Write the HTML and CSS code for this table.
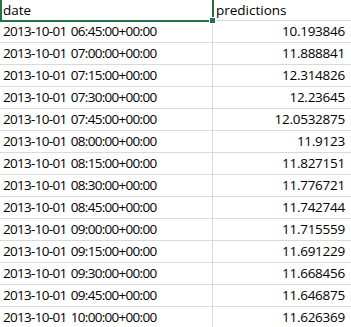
FILE: index.html
```html
<!DOCTYPE html>
<html>
<head>
<meta charset="utf-8">
<link rel="stylesheet" href="styles.css">
</head>
<body>
<div class="sheet">
  <div class="cell hdr">date</div>
  <div class="cell hdr colb">predictions</div>
  <div class="cell dt">2013-10-01 06:45:00+00:00</div><div class="cell colb num">10.193846</div>
  <div class="cell dt">2013-10-01 07:00:00+00:00</div><div class="cell colb num">11.888841</div>
  <div class="cell dt">2013-10-01 07:15:00+00:00</div><div class="cell colb num">12.314826</div>
  <div class="cell dt">2013-10-01 07:30:00+00:00</div><div class="cell colb num">12.23645</div>
  <div class="cell dt">2013-10-01 07:45:00+00:00</div><div class="cell colb num">12.0532875</div>
  <div class="cell dt">2013-10-01 08:00:00+00:00</div><div class="cell colb num">11.9123</div>
  <div class="cell dt">2013-10-01 08:15:00+00:00</div><div class="cell colb num">11.827151</div>
  <div class="cell dt">2013-10-01 08:30:00+00:00</div><div class="cell colb num">11.776721</div>
  <div class="cell dt">2013-10-01 08:45:00+00:00</div><div class="cell colb num">11.742744</div>
  <div class="cell dt">2013-10-01 09:00:00+00:00</div><div class="cell colb num">11.715559</div>
  <div class="cell dt">2013-10-01 09:15:00+00:00</div><div class="cell colb num">11.691229</div>
  <div class="cell dt">2013-10-01 09:30:00+00:00</div><div class="cell colb num">11.668456</div>
  <div class="cell dt">2013-10-01 09:45:00+00:00</div><div class="cell colb num">11.646875</div>
  <div class="cell dt">2013-10-01 10:00:00+00:00</div><div class="cell colb num">11.626369</div>
  <div class="selection"><span class="handle"></span></div>
</div>
</body>
</html>
```
FILE: styles.css
```css
html, body {
  margin: 0;
  padding: 0;
  background: #ffffff;
  overflow: hidden;
}
.sheet {
  position: relative;
  display: grid;
  grid-template-columns: 213px 1fr;
  width: 351px;
  font-family: "Open Sans", "Liberation Sans", sans-serif;
  font-size: 13.5px;
  color: #000000;
}
.cell {
  box-sizing: border-box;
  height: 22px;
  line-height: 21px;
  padding-left: 3px;
  border-bottom: 1px solid #dadada;
  border-right: 1px solid #dadada;
  white-space: nowrap;
  overflow: visible;
}
.cell.colb {
  border-right: none;
}
.cell.hdr {
  height: 21px;
  padding-top: 1px;
  line-height: 19px;
}
.cell.dt {
  letter-spacing: -0.7px;
  word-spacing: 1.5px;
}
.cell.num {
  text-align: right;
  padding-right: 6px;
  letter-spacing: -0.25px;
}
.selection {
  position: absolute;
  left: 0;
  top: -10px;
  width: 214px;
  height: 32px;
  box-sizing: border-box;
  border: 2px solid #217346;
}
.handle {
  position: absolute;
  right: -4px;
  bottom: -4px;
  width: 5px;
  height: 5px;
  background: #217346;
  border: 1px solid #ffffff;
}
```
